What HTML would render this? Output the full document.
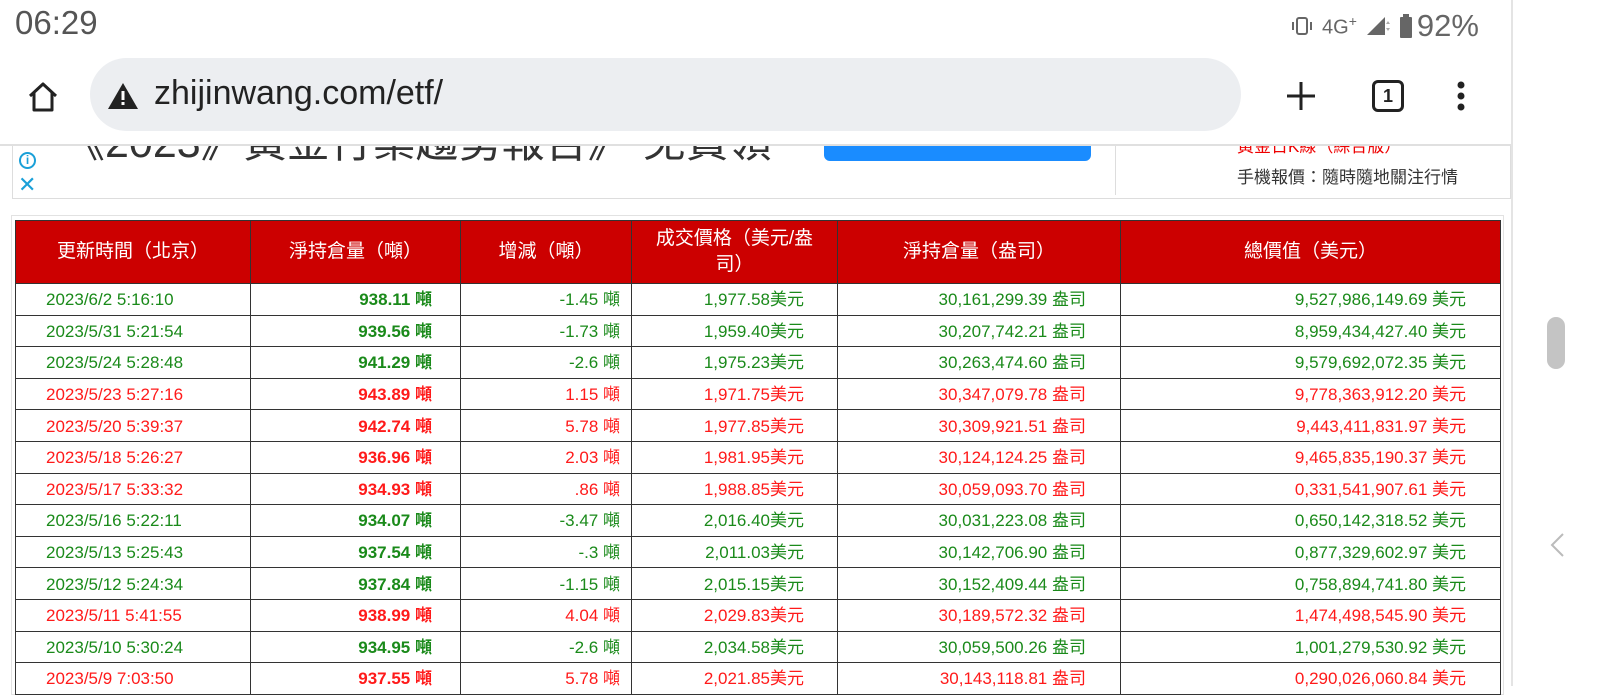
<!DOCTYPE html>
<html><head><meta charset="utf-8"><style>
*{margin:0;padding:0;box-sizing:border-box}
body{width:1600px;height:686px;overflow:hidden;background:#fff;position:relative;font-family:"Liberation Sans","Noto Sans CJK TC",sans-serif}
.a{position:absolute}
table{position:absolute;left:15px;top:220px;width:1485px;border-collapse:collapse;table-layout:fixed}
td,th{border:1px solid #333;font-size:17px;white-space:nowrap;overflow:hidden}
th{background:#cc0000;color:#fff;font-weight:normal;height:63px;font-size:19px;line-height:26px;white-space:normal;padding:0 10px}
td{height:31.6px;text-align:right;line-height:20px;vertical-align:middle;padding-top:2px}
td:nth-child(1){text-align:left;padding-left:30px}
td:nth-child(2){padding-right:28px;font-weight:bold}
td:nth-child(3){padding-right:11px}
td:nth-child(4){padding-right:33px}
td:nth-child(5),td:nth-child(6){padding-right:34px}
tr.g td{color:#1a8a1a}
tr.r td{color:#ff1a1a}
</style></head><body>
<div class="a" style="left:15px;top:4px;font-size:33px;color:#555">06:29</div>
<div class="a" style="left:1290px;top:8px;font-size:20px;color:#666;display:flex;align-items:center;gap:8px">
<svg width="24" height="20"><rect x="7" y="2" width="10" height="16" rx="2" fill="none" stroke="#666" stroke-width="2"/><rect x="2" y="6" width="2" height="8" fill="#666"/><rect x="20" y="6" width="2" height="8" fill="#666"/></svg>
<span>4G<sup style="font-size:14px">+</sup></span>
<svg width="26" height="22"><path d="M2 20 L20 2 L20 20Z" fill="#666"/><path d="M23 6l2 3h-4z M23 16l2-3h-4z" fill="#aaa"/></svg>
<svg width="14" height="24"><rect x="4" y="0" width="6" height="3" fill="#666"/><rect x="1" y="3" width="12" height="21" rx="1" fill="#666"/></svg>
<span style="font-size:31px;margin-left:-4px">92%</span></div>
<div class="a" style="left:1511px;top:0;width:2px;height:686px;background:#e4e4e4"></div>
<svg class="a" style="left:26px;top:80px" width="34" height="34" viewBox="0 0 34 34"><path d="M4 16 L17 4 L30 16 M8 13 V30 H26 V13" fill="none" stroke="#222" stroke-width="3" stroke-linejoin="round"/></svg>
<div class="a" style="left:90px;top:58px;width:1151px;height:73px;border-radius:37px;background:#eceef1"></div>
<svg class="a" style="left:107px;top:82px" width="32" height="28" viewBox="0 0 32 28"><path d="M16 1 L31 27 H1Z" fill="#222"/><rect x="14.5" y="9" width="3" height="9" fill="#fff"/><rect x="14.5" y="20" width="3" height="3" fill="#fff"/></svg>
<div class="a" style="left:154px;top:74px;font-size:34px;color:#222">zhijinwang.com/etf/</div>
<svg class="a" style="left:1285px;top:80px" width="32" height="32"><path d="M16 2V30M2 16H30" stroke="#222" stroke-width="3"/></svg>
<div class="a" style="left:1372px;top:80px;width:32px;height:32px;border:3px solid #222;border-radius:6px;font-size:18px;font-weight:bold;text-align:center;line-height:26px;color:#222">1</div>
<svg class="a" style="left:1455px;top:80px" width="12" height="32"><circle cx="6" cy="5" r="3.5" fill="#222"/><circle cx="6" cy="16" r="3.5" fill="#222"/><circle cx="6" cy="27" r="3.5" fill="#222"/></svg>
<div class="a" style="left:0;top:146px;width:1511px;height:57px;overflow:hidden">
 <div class="a" style="left:12px;top:-4px;width:1499px;height:57px;border:1px solid #ddd;border-top:none"></div>
 <div class="a" style="left:62px;top:-38px;font-size:43px;color:#333;white-space:nowrap">《2023》黃金行業趨勢報告》 免費領</div>
 <div class="a" style="left:824px;top:-10px;width:267px;height:25px;background:#1a8cff;border-radius:6px"></div>
 <div class="a" style="left:1115px;top:-4px;width:1px;height:53px;background:#ddd"></div>
 <div class="a" style="left:1237px;top:-14px;font-size:17px;color:#e00">黃金日K線（綜合版）</div>
 <div class="a" style="left:1237px;top:17px;font-size:17px;color:#333">手機報價：隨時隨地關注行情</div>
 <div class="a" style="left:19px;top:6px;width:17px;height:17px;border:2px solid #1aa0d8;border-radius:50%;color:#1aa0d8;font-size:12px;text-align:center;line-height:13px;font-weight:bold">i</div>
 <div class="a" style="left:18px;top:26px;font-size:22px;color:#1aa0d8">✕</div>
</div>
<div class="a" style="left:11px;top:215px;width:1493px;height:480px;border:1px solid #e2e2e2"></div>
<table>
<colgroup><col style="width:235px"><col style="width:210px"><col style="width:171px"><col style="width:206px"><col style="width:283px"><col style="width:380px"></colgroup>
<tr><th>更新時間（北京）</th><th>淨持倉量（噸）</th><th>增減（噸）</th><th>成交價格（美元/盎司）</th><th>淨持倉量（盎司）</th><th>總價值（美元）</th></tr>
<tr class="g"><td>2023/6/2 5:16:10</td><td>938.11 噸</td><td>-1.45 噸</td><td>1,977.58美元</td><td>30,161,299.39 盎司</td><td>9,527,986,149.69 美元</td></tr>
<tr class="g"><td>2023/5/31 5:21:54</td><td>939.56 噸</td><td>-1.73 噸</td><td>1,959.40美元</td><td>30,207,742.21 盎司</td><td>8,959,434,427.40 美元</td></tr>
<tr class="g"><td>2023/5/24 5:28:48</td><td>941.29 噸</td><td>-2.6 噸</td><td>1,975.23美元</td><td>30,263,474.60 盎司</td><td>9,579,692,072.35 美元</td></tr>
<tr class="r"><td>2023/5/23 5:27:16</td><td>943.89 噸</td><td>1.15 噸</td><td>1,971.75美元</td><td>30,347,079.78 盎司</td><td>9,778,363,912.20 美元</td></tr>
<tr class="r"><td>2023/5/20 5:39:37</td><td>942.74 噸</td><td>5.78 噸</td><td>1,977.85美元</td><td>30,309,921.51 盎司</td><td>9,443,411,831.97 美元</td></tr>
<tr class="r"><td>2023/5/18 5:26:27</td><td>936.96 噸</td><td>2.03 噸</td><td>1,981.95美元</td><td>30,124,124.25 盎司</td><td>9,465,835,190.37 美元</td></tr>
<tr class="r"><td>2023/5/17 5:33:32</td><td>934.93 噸</td><td>.86 噸</td><td>1,988.85美元</td><td>30,059,093.70 盎司</td><td>0,331,541,907.61 美元</td></tr>
<tr class="g"><td>2023/5/16 5:22:11</td><td>934.07 噸</td><td>-3.47 噸</td><td>2,016.40美元</td><td>30,031,223.08 盎司</td><td>0,650,142,318.52 美元</td></tr>
<tr class="g"><td>2023/5/13 5:25:43</td><td>937.54 噸</td><td>-.3 噸</td><td>2,011.03美元</td><td>30,142,706.90 盎司</td><td>0,877,329,602.97 美元</td></tr>
<tr class="g"><td>2023/5/12 5:24:34</td><td>937.84 噸</td><td>-1.15 噸</td><td>2,015.15美元</td><td>30,152,409.44 盎司</td><td>0,758,894,741.80 美元</td></tr>
<tr class="r"><td>2023/5/11 5:41:55</td><td>938.99 噸</td><td>4.04 噸</td><td>2,029.83美元</td><td>30,189,572.32 盎司</td><td>1,474,498,545.90 美元</td></tr>
<tr class="g"><td>2023/5/10 5:30:24</td><td>934.95 噸</td><td>-2.6 噸</td><td>2,034.58美元</td><td>30,059,500.26 盎司</td><td>1,001,279,530.92 美元</td></tr>
<tr class="r"><td>2023/5/9 7:03:50</td><td>937.55 噸</td><td>5.78 噸</td><td>2,021.85美元</td><td>30,143,118.81 盎司</td><td>0,290,026,060.84 美元</td></tr>
</table>
<div class="a" style="left:0;top:0;width:1511px;height:146px;background:transparent;border-bottom:2px solid #e0e0e0"></div>
<div class="a" style="left:1547px;top:317px;width:18px;height:52px;border-radius:9px;background:#c4c4c4"></div>
<svg class="a" style="left:1548px;top:532px" width="18" height="26"><path d="M15 2 L4 13 L15 24" fill="none" stroke="#bbb" stroke-width="2"/></svg>
</body></html>
